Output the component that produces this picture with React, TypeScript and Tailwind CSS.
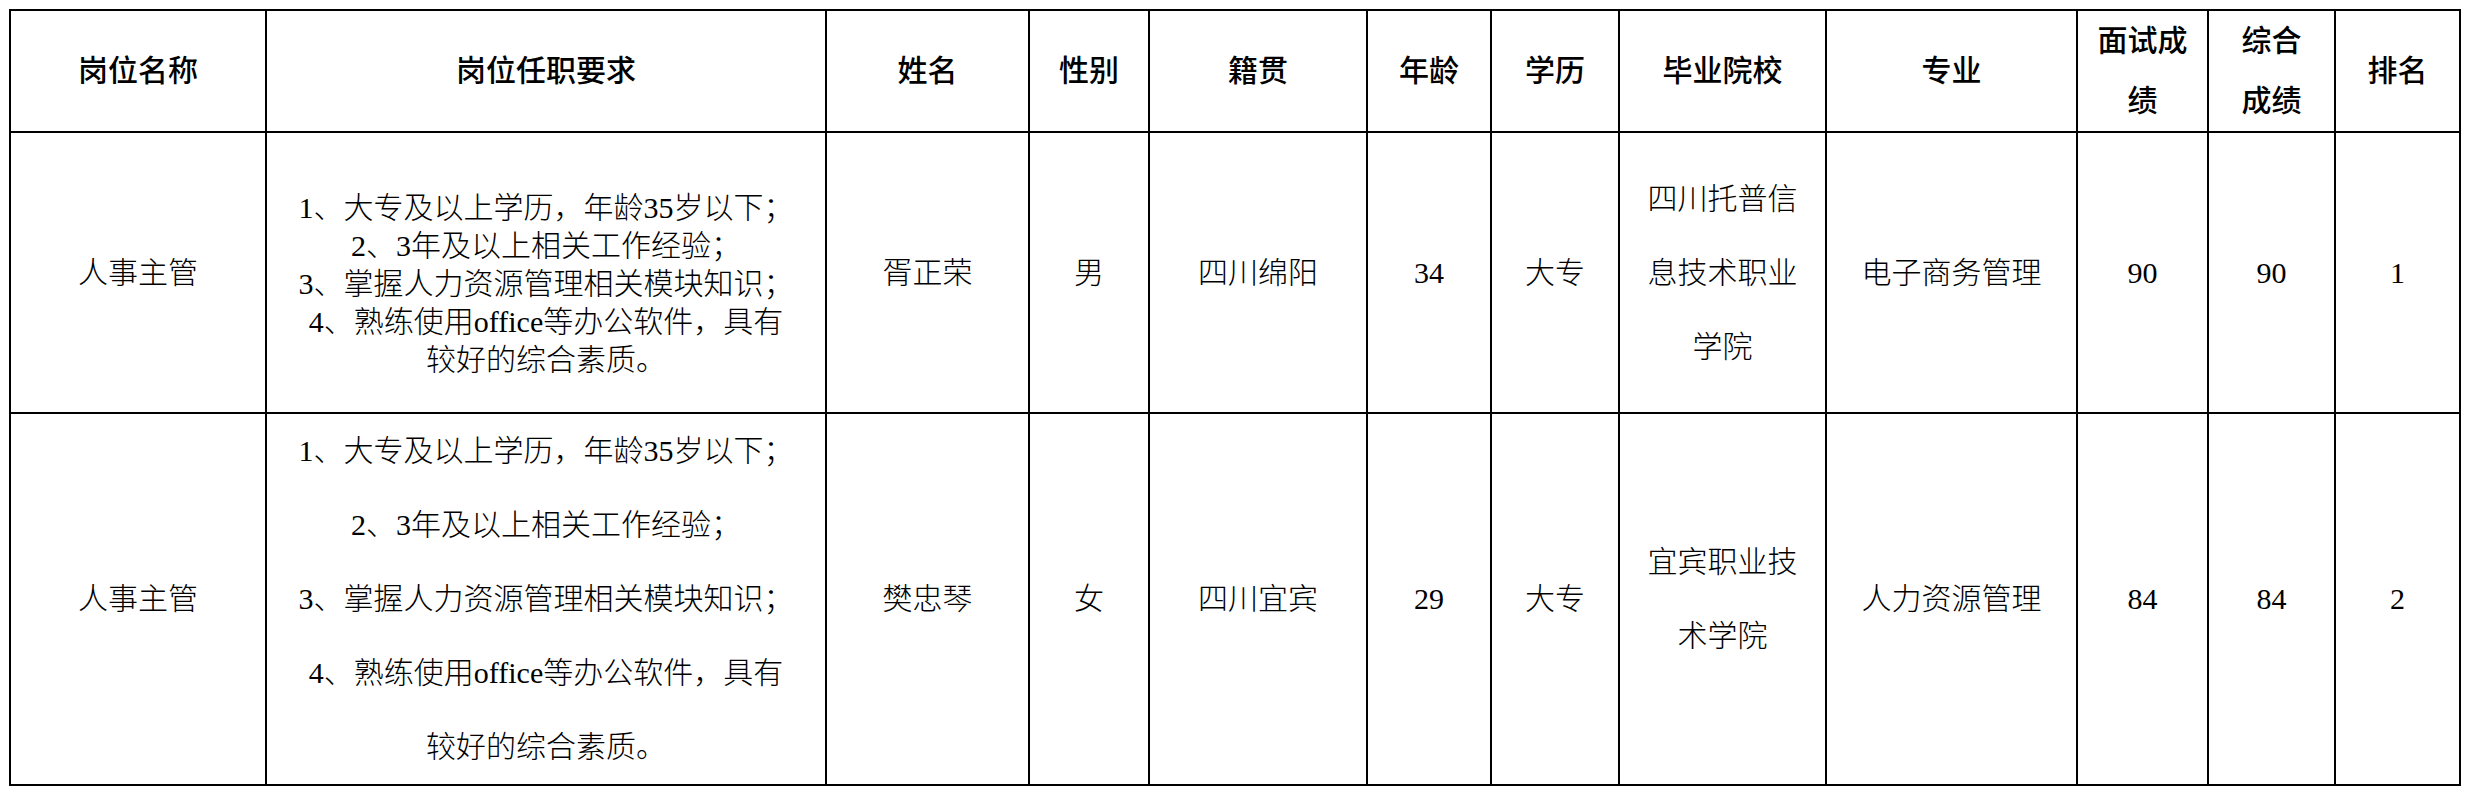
import React from "react";

const colClasses = [
  "w-[256px]",
  "w-[560px]",
  "w-[203px]",
  "w-[120px]",
  "w-[218px]",
  "w-[124px]",
  "w-[128px]",
  "w-[207px]",
  "w-[251px]",
  "w-[131px]",
  "w-[127px]",
  "w-[125px]",
];

const td = "border-2 border-black text-center align-middle p-0 text-black";

function Lines({ items, lh }: { items: string[]; lh: string }) {
  return (
    <div className={lh}>
      {items.map((t, i) => (
        <div key={i}>{t}</div>
      ))}
    </div>
  );
}

const reqs = [
  "1、大专及以上学历，年龄35岁以下；",
  "2、3年及以上相关工作经验；",
  "3、掌握人力资源管理相关模块知识；",
  "4、熟练使用office等办公软件，具有",
  "较好的综合素质。",
];

export default function App() {
  return (
    <div className="bg-white w-[2468px] h-[792px] pt-[9px] pl-[9px]">
      <table className="border-collapse table-fixed w-[2452px] font-['Liberation_Serif','Noto_Sans_CJK_SC',serif] text-[30px] leading-[38px] font-light">
        <colgroup>
          {colClasses.map((c, i) => (
            <col key={i} className={c} />
          ))}
        </colgroup>
        <tbody>
          <tr className="h-[121px] font-medium">
            <td className={td}>岗位名称</td>
            <td className={td}>岗位任职要求</td>
            <td className={td}>姓名</td>
            <td className={td}>性别</td>
            <td className={td}>籍贯</td>
            <td className={td}>年龄</td>
            <td className={td}>学历</td>
            <td className={td}>毕业院校</td>
            <td className={td}>专业</td>
            <td className={td}>
              <Lines items={["面试成", "绩"]} lh="leading-[60px]" />
            </td>
            <td className={td}>
              <Lines items={["综合", "成绩"]} lh="leading-[60px]" />
            </td>
            <td className={td}>排名</td>
          </tr>
          <tr className="h-[281px]">
            <td className={td}>人事主管</td>
            <td className={`${td} pt-[22px]`}>
              <Lines items={reqs} lh="leading-[38px]" />
            </td>
            <td className={td}>胥正荣</td>
            <td className={td}>男</td>
            <td className={td}>四川绵阳</td>
            <td className={td}>34</td>
            <td className={td}>大专</td>
            <td className={td}>
              <Lines items={["四川托普信", "息技术职业", "学院"]} lh="leading-[74px]" />
            </td>
            <td className={td}>电子商务管理</td>
            <td className={td}>90</td>
            <td className={td}>90</td>
            <td className={td}>1</td>
          </tr>
          <tr className="h-[371px]">
            <td className={td}>人事主管</td>
            <td className={td}>
              <Lines items={reqs} lh="leading-[74px]" />
            </td>
            <td className={td}>樊忠琴</td>
            <td className={td}>女</td>
            <td className={td}>四川宜宾</td>
            <td className={td}>29</td>
            <td className={td}>大专</td>
            <td className={td}>
              <Lines items={["宜宾职业技", "术学院"]} lh="leading-[74px]" />
            </td>
            <td className={td}>人力资源管理</td>
            <td className={td}>84</td>
            <td className={td}>84</td>
            <td className={td}>2</td>
          </tr>
        </tbody>
      </table>
    </div>
  );
}
